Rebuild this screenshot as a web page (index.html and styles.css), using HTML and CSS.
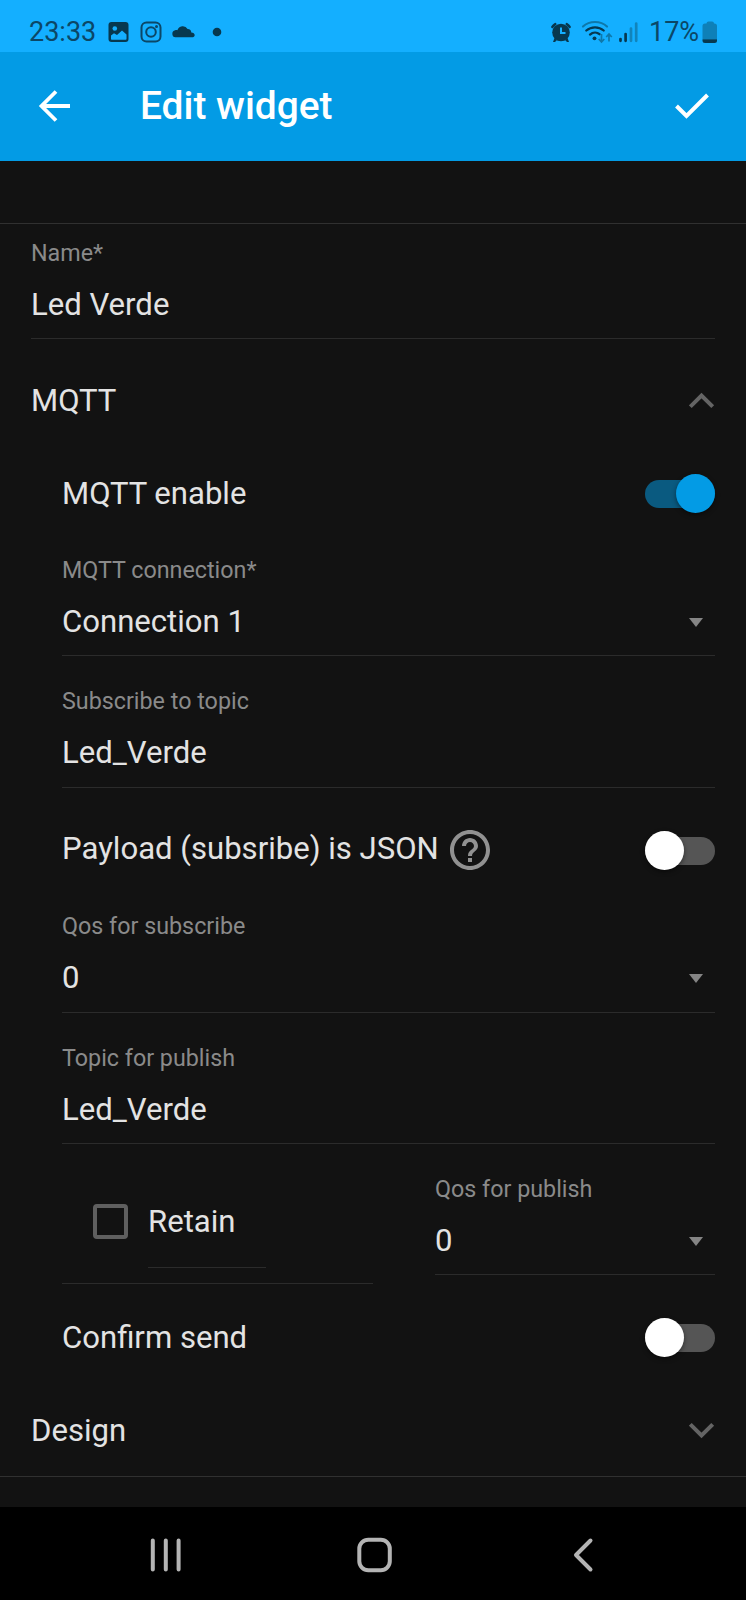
FILE: index.html
```html
<!DOCTYPE html>
<html lang="en">
<head>
<meta charset="utf-8">
<title>Edit widget</title>
<link rel="stylesheet" href="styles.css">
</head>
<body>
<div class="screen">
  <div class="status">
    <span class="time">23:33</span>
    <svg class="status-left" width="125" height="52" viewBox="100 0 125 52">
      <rect x="108.500" y="22" width="20" height="20" rx="3" fill="#07384f"/>
      <circle cx="114.800" cy="28.500" r="2.300" fill="#14afff"/>
      <path d="M111 35.500l3-2.300 3 1.800 5-4.500 4.500 4V39q0 .8-.8.800h-13.900q-.8 0-.8-.8z" fill="#14afff"/>
      <g fill="none" stroke="#0b4767" stroke-width="2"><rect x="141.500" y="22.500" width="19" height="19" rx="5"/><circle cx="151" cy="32" r="4.800"/></g>
      <circle cx="156.500" cy="26.500" r="1.500" fill="#0b4767"/>
      <path d="M175.500 37.300a3.600 3.600 0 0 1-.3-7.100c.8-.2 1.700-.1 2.200.1a5.600 5.600 0 0 1 10.200-1.200c2.500.1 3.600 1.600 3.700 3.300 2 .2 3.400 1.200 3.400 2.600s-1.200 2.300-2.900 2.300z" fill="#07384f"/>
      <circle cx="217" cy="32" r="4.300" fill="#07384f"/>
    </svg>
    <svg class="status-right" width="92" height="52" viewBox="548 0 92 52">
      <g fill="#07384f"><circle cx="561" cy="32.500" r="8.800"/><path d="M554.500 38l2.500 2-2 2h-2zM567.500 38l-2.500 2 2 2h2z"/></g>
      <g fill="none" stroke="#07384f" stroke-width="2.400" stroke-linecap="round"><path d="M552.300 27c.8-1.300 1.800-2.200 3-2.900M569.700 27c-.8-1.300-1.800-2.200-3-2.900"/></g>
      <path d="M561 27.500v5.500h4.500" fill="none" stroke="#14afff" stroke-width="2"/>
      <g fill="none" stroke-linecap="round">
        <path d="M583 26.500c6.500-6 17.500-6 24 0" stroke="#0e78aa" stroke-width="2.200"/>
        <path d="M586.300 30.500c5-4.300 12.400-4.300 17.400 0" stroke="#07384f" stroke-width="2.300"/>
        <path d="M590 34.600c3-2.600 7-2.600 9.500-.4" stroke="#07384f" stroke-width="2.300"/>
      </g>
      <circle cx="594.500" cy="38.300" r="1.900" fill="#07384f"/>
      <g fill="none" stroke="#0e78aa" stroke-width="1.700"><path d="M601.500 34v8M598.700 39l2.800 3 2.800-3M609 41.500V34M606.200 37l2.800-3 2.800 3"/></g>
      <g stroke-width="2.700" stroke-linecap="round"><path d="M620.500 39v1.800M625.600 34v6.800" stroke="#07384f"/><path d="M631 28.500v12.300M636.200 23.500v17.300" stroke="#1184bb"/></g>
    </svg>
    <span class="percent">17%</span>
    <svg class="battery" width="16" height="52" viewBox="702 0 16 52">
      <path d="M706.500 23.500q0-2 2-2h3.500q2 0 2 2h.5q2.500 0 2.500 2.500v13H702.500V26q0-2.500 2.500-2.500z" fill="#0e80b8"/>
      <path d="M702.500 39.300H717v1.200q0 2.500-2.500 2.500H705q-2.500 0-2.500-2.500z" fill="#07384f"/>
    </svg>
  </div>
  <header class="appbar">
    <svg width="34" height="34" viewBox="0 0 34 34" fill="none" stroke="#fff" stroke-width="3.800"><path d="M32 17H4M18 2.500L3.500 17 18 31.500"/></svg>
    <h1 class="title">Edit widget</h1>
    <svg width="36" height="30" viewBox="0 0 36 30" fill="none" stroke="#fff" stroke-width="4"><path d="M2.500 15l10 10L33.500 4"/></svg>
  </header>
  <main class="content">
    <section class="widget">
      <div class="field field-name"><span class="label">Name*</span><span class="value">Led Verde</span></div>
      <div class="row row-mqtt"><span>MQTT</span><svg class="chevron" width="26" height="18" viewBox="0 0 26 18"><path d="M1.300 14.700L12.500 3.500l11.200 11.200"/></svg></div>
      <div class="group">
        <div class="row row-enable"><span>MQTT enable</span><span class="switch on"></span></div>
        <div class="field"><span class="label">MQTT connection*</span><span class="value">Connection 1<i class="caret"></i></span></div>
        <div class="field field-topic"><span class="label">Subscribe to topic</span><span class="value">Led_Verde</span></div>
        <div class="row row-json"><span>Payload (subsribe) is JSON</span>
          <svg class="help" width="40" height="40" viewBox="2 2 20 20"><path d="M11 18h2v-2h-2v2zm1-16C6.480 2 2 6.480 2 12s4.480 10 10 10 10-4.480 10-10S17.520 2 12 2zm0 18c-4.410 0-8-3.590-8-8s3.590-8 8-8 8 3.590 8 8-3.590 8-8 8zm0-14c-2.210 0-4 1.790-4 4h2c0-1.100.9-2 2-2s2 .9 2 2c0 2-3 1.750-3 5h2c0-2.250 3-2.500 3-5 0-2.210-1.790-4-4-4z"/></svg>
          <span class="switch"></span></div>
        <div class="field field-qos"><span class="label">Qos for subscribe</span><span class="value">0<i class="caret"></i></span></div>
        <div class="field"><span class="label">Topic for publish</span><span class="value">Led_Verde</span></div>
        <div class="columns">
          <div class="retain"><span class="checkbox"></span><span class="retain-label">Retain</span></div>
          <div class="field"><span class="label">Qos for publish</span><span class="value">0<i class="caret"></i></span></div>
        </div>
        <div class="row row-confirm"><span>Confirm send</span><span class="switch"></span></div>
      </div>
      <div class="row row-design"><span>Design</span><svg class="chevron" width="26" height="18" viewBox="0 0 26 18"><path d="M1.300 2.300L12.500 13.500 23.700 2.300"/></svg></div>
    </section>
  </main>
  <nav class="navbar">
    <svg width="746" height="93" viewBox="0 0 746 93" fill="none" stroke="#b4b4b4" stroke-linecap="round">
      <path d="M152.800 33.500v29M165.800 33.500v29M178.600 33.500v29" stroke-width="4"/>
      <rect x="359.300" y="32.800" width="30.500" height="30.500" rx="9" stroke-width="4"/>
      <path d="M590.500 33.500L576 48l14.500 14.500" stroke-width="4" stroke-linejoin="round"/>
    </svg>
  </nav>
</div>
</body>
</html>
```

FILE: styles.css
```css
* { box-sizing: border-box; }
body { margin: 0; background: #121212; color: #e3e3e3; font-family: Roboto, "Noto Sans", sans-serif; font-size: 31.1px; line-height: 40px; }
svg { display: block; flex: none; }
.screen { width: 746px; height: 1600px; display: flex; flex-direction: column; overflow: hidden; }

.status { height: 52px; display: flex; background: #14afff; color: #0b4767; font-size: 27px; line-height: 64px; padding: 0 28px 0 29px; }
.time { width: 71px; }
.status-right { margin-left: auto; }
.percent { width: 62px; padding-left: 9px; white-space: nowrap; }

.appbar { height: 109px; display: flex; align-items: center; background: #039be5; color: #fff; padding: 0 36px 2px 38px; }
.title { flex: 1; margin: 0; padding-left: 68px; font-size: 38.900px; font-weight: 500; line-height: 50px; }

.content { flex: 1; padding-top: 62px; }
.widget { height: 1254px; border-top: 1px solid #303030; border-bottom: 1px solid #303030; padding: 0 31px; }
.group { padding-left: 31px; }

.field { height: 131px; display: flex; flex-direction: column; justify-content: flex-end; border-bottom: 1px solid #2b2b2b; padding-bottom: 13px; }
.label { font-size: 23.300px; line-height: 28px; color: #8a8a8a; margin-bottom: 18px; }
.value { display: flex; align-items: center; justify-content: space-between; }
.field-name { height: 115px; }
.field-topic { height: 132px; padding-bottom: 14px; }
.field-qos { height: 102px; padding-bottom: 14px; }
.caret { border: 7.500px solid transparent; border-top: 9.500px solid #858585; border-bottom: 0; margin-right: 12px; }

.row { display: flex; align-items: center; justify-content: space-between; }
.row-mqtt { height: 123px; }
.row-enable { height: 63px; }
.row-json { height: 123px; padding-bottom: 1px; }
.row-json .switch { margin-top: 3px; }
.row-confirm { height: 107px; }
.row-design { height: 79px; }
.chevron path { fill: none; stroke: #646464; stroke-width: 4; }
.help { fill: #919191; margin: 2px auto 0 11px; }

.switch { width: 70px; height: 28px; border-radius: 14px; background: #555; display: flex; align-items: center; }
.switch::before { content: ""; width: 39px; height: 39px; flex: none; border-radius: 50%; background: #fff; box-shadow: 0 2px 5px rgba(0, 0, 0, .45); }
.switch.on { background: #0a5a80; justify-content: flex-end; }
.switch.on::before { background: #039be5; }

.columns { height: 140px; display: flex; align-items: flex-start; gap: 62px; }
.columns .field { flex: 1; }
.retain { width: 311px; height: 140px; border-bottom: 1px solid #2b2b2b; padding: 31px 0 15px 31px; display: flex; gap: 20px; }
.checkbox { width: 35px; height: 35px; margin-top: 29px; border: 4px solid #5f5f5f; border-radius: 4px; }
.retain-label { width: 118px; padding-top: 27px; border-bottom: 1px solid #2b2b2b; }

.navbar { height: 93px; background: #000; }
```
